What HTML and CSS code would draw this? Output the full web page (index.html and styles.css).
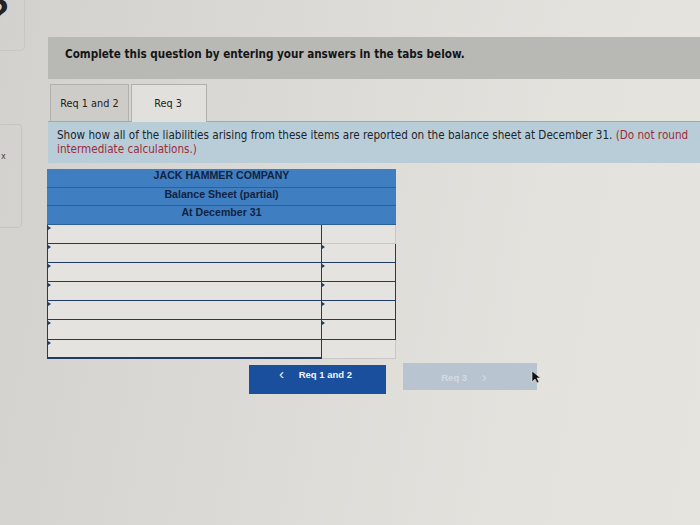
FILE: index.html
```html
<!DOCTYPE html>
<html>
<head>
<meta charset="utf-8">
<link rel="stylesheet" href="styles.css">
</head>
<body>
<div class="edge">
  <span class="edge-digit">?</span>
  <div class="edge-top"></div>
  <div class="edge-box"></div>
  <span class="edge-x">x</span>
</div>
<div class="page">
  <div class="header">Complete this question by entering your answers in the tabs below.</div>
  <div class="tabs">
    <div class="tab">Req 1 and 2</div>
    <div class="tab active">Req 3</div>
  </div>
  <div class="instructions">
    Show how all of the liabilities arising from these items are reported on the balance sheet at December 31. <span class="warn">(Do not round intermediate calculations.)</span>
  </div>
  <div class="sheet">
    <div class="sheet-head">JACK HAMMER COMPANY</div>
    <div class="sheet-head">Balance Sheet (partial)</div>
    <div class="sheet-head">At December 31</div>
    <div class="row"><div class="cell-l"></div><div class="cell-r plain"></div></div>
    <div class="row"><div class="cell-l"></div><div class="cell-r"></div></div>
    <div class="row"><div class="cell-l"></div><div class="cell-r"></div></div>
    <div class="row"><div class="cell-l"></div><div class="cell-r"></div></div>
    <div class="row"><div class="cell-l"></div><div class="cell-r"></div></div>
    <div class="row"><div class="cell-l"></div><div class="cell-r"></div></div>
    <div class="row last"><div class="cell-l"></div><div class="cell-r plain"></div></div>
  </div>
  <div class="nav">
    <div class="btn prev"><span class="chev">&lsaquo;</span> Req 1 and 2</div>
    <div class="btn next">Req 3 <span class="chev">&rsaquo;</span></div>
    <svg class="cursor" width="10" height="14" viewBox="0 0 10 14"><path d="M1 1 L1 12 L4 9 L6 13 L8 12 L6 8 L9.5 8 Z" fill="#111" stroke="#eee" stroke-width="0.6"/></svg>
  </div>
</div>
</body>
</html>
```
FILE: styles.css
```css
html, body {
  margin: 0;
  padding: 0;
}
body {
  width: 700px;
  height: 525px;
  overflow: hidden;
  position: relative;
  font-family: "DejaVu Sans Condensed", "DejaVu Sans", sans-serif;
  color: #1c1c1c;
  background: linear-gradient(100deg, #d3d1ce 0%, #dcdad6 40%, #e4e2dd 75%, #e6e4df 100%);
}
.edge {
  position: absolute;
  left: 0;
  top: 0;
  width: 40px;
  height: 525px;
}
.edge-digit {
  position: absolute;
  left: -14px;
  top: -8px;
  font: bold 38px "Liberation Sans", sans-serif;
  color: #222;
}
.edge-top {
  position: absolute;
  left: -4px;
  top: -10px;
  width: 28px;
  height: 60px;
  border: 1px solid #c8c6c2;
  border-left: none;
  border-top: none;
  border-radius: 0 0 5px 0;
}
.edge-box {
  position: absolute;
  left: -4px;
  top: 124px;
  width: 25px;
  height: 102px;
  border: 1px solid #c6c4c0;
  border-left: none;
  border-radius: 0 3px 5px 0;
}
.edge-x {
  position: absolute;
  left: 1px;
  top: 151px;
  font-size: 9px;
  color: #444;
}
.page {
  padding: 37px 0 0 48px;
}
.header {
  height: 42px;
  background: #b8b8b5;
  padding-left: 17px;
  line-height: 34px;
  font-weight: bold;
  font-size: 11.6px;
  color: #151515;
}
.tabs {
  display: flex;
  margin-top: 5px;
  padding-left: 2px;
  border-bottom: 1px solid #a6a6a3;
}
.tab {
  width: 77px;
  height: 36px;
  line-height: 38px;
  font-size: 10.8px;
  text-align: center;
  background: #cdccc9;
  border: 1px solid #b0b0ad;
  border-bottom: none;
  color: #222;
}
.tab.active {
  width: 74px;
  margin-left: 2px;
  background: #e1e0dc;
  text-indent: -2px;
  margin-bottom: -1px;
  height: 37px;
}
.instructions {
  background: #b9cdd8;
  padding: 6px 6px 7px 9px;
  font-size: 11.6px;
  line-height: 14px;
  color: #202428;
}
.warn {
  color: #9c2c38;
}
.sheet {
  width: 349px;
  margin: 6px 0 0 -1px;
}
.sheet-head {
  height: 17.5px;
  line-height: 21px;
  background: #3f7ec1;
  border-bottom: 1.5px solid #2d5f98;
  text-align: center;
  font: bold 10.6px "Liberation Sans", Arial, sans-serif;
  color: #13233f;
}
.row {
  display: flex;
  height: 19.2px;
}
.cell-l {
  flex: 0 0 275px;
  background: #e4e3df;
  border: 1.5px solid #213a66;
  border-top: none;
  box-sizing: border-box;
  position: relative;
}
.cell-l::before {
  content: "";
  position: absolute;
  left: 0;
  top: 1px;
  border-left: 3px solid #213a66;
  border-top: 2px solid transparent;
  border-bottom: 2px solid transparent;
}
.cell-r {
  flex: 1;
  background: #e4e3df;
  border: 1.5px solid #213a66;
  border-left: none;
  border-top: none;
  box-sizing: border-box;
  position: relative;
}
.cell-r::before {
  content: "";
  position: absolute;
  left: 0;
  top: 1px;
  border-left: 3px solid #213a66;
  border-top: 2px solid transparent;
  border-bottom: 2px solid transparent;
}
.cell-r.plain {
  border-color: #c9c8c4;
}
.cell-r.plain::before {
  display: none;
}
.row.last .cell-l {
  border-bottom-width: 2px;
}
.nav {
  position: relative;
  display: flex;
  align-items: flex-start;
  margin: 6px 0 0 201px;
  gap: 17px;
}
.btn {
  width: 137px;
  height: 29px;
  line-height: 29px;
  text-align: center;
  font: bold 9.5px "Liberation Sans", Arial, sans-serif;
  box-sizing: border-box;
}
.btn.prev {
  background: #1a4f9e;
  color: #f2f4f8;
  padding-right: 4px;
}
.btn.next {
  width: 134px;
  height: 27px;
  line-height: 27px;
  margin-top: -2px;
  background: #b8c4cf;
  color: #d4dbe3;
}
.chev {
  font-size: 15px;
  font-weight: normal;
  margin: 0 12px;
  vertical-align: -1px;
}
.btn.prev .chev {
  margin-left: 0;
}
.cursor {
  position: absolute;
  left: 282px;
  top: 5px;
}
```
